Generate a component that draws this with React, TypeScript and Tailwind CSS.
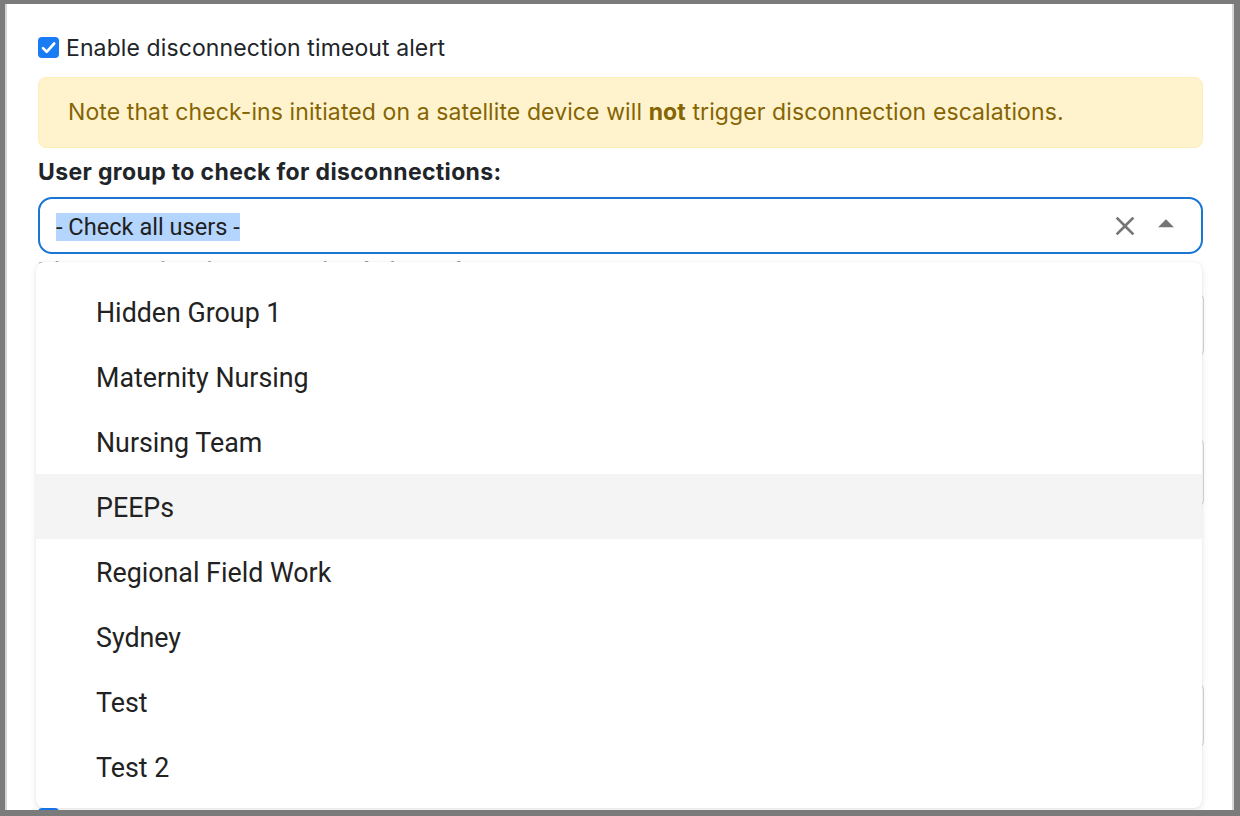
import React from "react";

const options = [
  "Hidden Group 1",
  "Maternity Nursing",
  "Nursing Team",
  "PEEPs",
  "Regional Field Work",
  "Sydney",
  "Test",
  "Test 2",
];

function Check({ className }: { className?: string }) {
  return (
    <div className={"w-[21px] h-[21px] rounded-[4px] bg-[#1a7cf5] flex items-center justify-center shrink-0 " + (className ?? "")}>
      <svg width="19" height="19" viewBox="0 0 20 20" fill="none">
        <path d="M4.2 10.6l3.9 3.9L16 5.8" stroke="white" strokeWidth="2.8" strokeLinecap="round" strokeLinejoin="round" />
      </svg>
    </div>
  );
}

export default function App() {
  return (
    <div className="w-[1240px] h-[816px] bg-[#7b7b7b] pt-[4px] pl-[5px] overflow-hidden">
      <div
        className="w-[1229px] h-[806px] bg-white border-l-2 border-r-2 border-[#d6d6d6] overflow-hidden text-[#212529]"
        style={{ fontFamily: "Inter, 'Noto Sans', sans-serif" }}
      >
        <div className="ml-[31px] w-[1166px] pt-[28px]">
          {/* checkbox row */}
          <div className="flex items-start gap-[7px]">
            <Check className="mt-[5px]" />
            <span className="text-[23px] leading-[33px] tracking-[0.1px]">Enable disconnection timeout alert</span>
          </div>

          {/* alert */}
          <div className="mt-[12px] w-[1165px] bg-[#fff3cd] border border-[#ffeeba] rounded-[8px] px-[29px] py-[18px] text-[#856404] text-[23px] leading-[33px] tracking-[0.1px]">
            Note that check-ins initiated on a satellite device will <b className="font-bold">not</b> trigger disconnection escalations.
          </div>

          {/* label */}
          <div className="mt-[8px] text-[23px] leading-[33px] font-bold tracking-[0.35px]">User group to check for disconnections:</div>

          {/* select */}
          <div className="relative mt-[8px] w-[1165px]">
            <div className="h-[57px] border-2 border-[#1976d2] rounded-[14px] flex items-center pl-[16px] pr-[16px]">
              <div className="flex-1 pt-[3px]" style={{ fontFamily: "Roboto, sans-serif" }}>
                <span className="bg-[#b4d5fe] text-[23.6px] leading-[28px] inline-block text-[#1f1f1f]">- Check all users -</span>
              </div>
              <svg width="32" height="32" viewBox="0 0 24 24" fill="#757575">
                <path d="M19 6.41 17.59 5 12 10.59 6.41 5 5 6.41 10.59 12 5 17.59 6.41 19 12 13.41 17.59 19 19 17.59 13.41 12z" />
              </svg>
              <svg width="38" height="38" viewBox="0 0 24 24" fill="#757575" className="ml-[6px] -mt-[3px]">
                <path d="m7 14 5-5 5 5z" />
              </svg>
            </div>

            {/* dropdown menu */}
            <div
              className="absolute top-[65px] left-[-2px] w-[1166px] h-[546px] bg-white rounded-[8px] shadow-[0_2px_6px_rgba(0,0,0,0.10),0_0_1px_rgba(0,0,0,0.12)] pt-[17px] z-10 overflow-hidden"
              style={{ fontFamily: "Roboto, sans-serif" }}
            >
              {options.map((o) => (
                <div
                  key={o}
                  className={
                    "h-[65px] flex items-center pl-[60px] pt-[3px] text-[26.8px] text-[#222222] " +
                    (o === "PEEPs" ? "bg-[#f4f4f4]" : "")
                  }
                >
                  {o}
                </div>
              ))}
            </div>
          </div>

          {/* background content hidden under menu */}
          <div className="text-[22px] leading-[33px] font-bold text-[#9a9a9a]">Disconnection timeout period (minutes):</div>
          <div className="mt-[5px] h-[66px] border border-[#ced4da] rounded-[8px]" />
          <div className="h-[79px]" />
          <div className="h-[71px] border border-[#ced4da] rounded-[8px]" />
          <div className="h-[174px]" />
          <div className="h-[67px] border border-[#ced4da] rounded-[8px]" />
          <div className="mt-[57px] flex items-start gap-[7px]">
            <Check className="mt-[2px]" />
          </div>
        </div>
      </div>
    </div>
  );
}
